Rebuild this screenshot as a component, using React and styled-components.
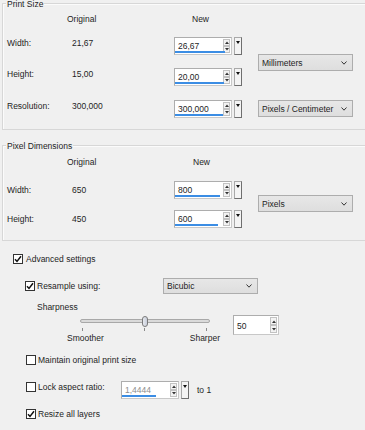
import React from 'react';
import styled, { createGlobalStyle } from 'styled-components';

const Global = createGlobalStyle`
  html, body { margin: 0; padding: 0; background: #f0f0f0; }
  body {
    font-family: "Liberation Sans", Arial, sans-serif;
    font-size: 8.5px;
    color: #1e1e1e;
    overflow: hidden;
  }
  #root { width: 365px; height: 430px; overflow: hidden; }
`;

const Page = styled.div`
  width: 365px;
  height: 430px;
  box-sizing: border-box;
  padding: 3px 0 0 2px;
  display: flex;
  flex-direction: column;
  overflow: hidden;
`;

const Group = styled.section`
  position: relative;
  flex: none;
  width: 372px;
  height: ${p => p.$h}px;
  box-sizing: border-box;
  border: 1px solid #d7d7d7;
  border-right: none;
  box-shadow: inset 1px 1px 0 #fbfbfb;
  margin-bottom: ${p => p.$mb || 0}px;
  padding: ${p => p.$pt}px 0 0 4px;
`;

const Legend = styled.span`
  position: absolute;
  top: -5px;
  left: 3px;
  padding: 0 1px;
  line-height: 10px;
  background: #f0f0f0;
  white-space: nowrap;
`;

const Grid = styled.div`
  display: grid;
  grid-template-columns: 65px 102px 68px 16px 95px;
  grid-template-rows: ${p => p.$rows};
  align-items: start;
`;

const ColHead = styled.span`
  grid-row: 1;
  grid-column: ${p => p.$col};
  margin-left: ${p => p.$indent}px;
  line-height: 10px;
  white-space: nowrap;
`;

const Cell = styled.span`
  grid-row: ${p => p.$r};
  grid-column: ${p => p.$col};
  padding-top: ${p => p.$off}px;
  line-height: 10px;
  white-space: nowrap;
`;

const SpinPlace = styled.div`
  grid-row: ${p => p.$r};
  grid-column: 3;
`;

const SelectPlace = styled.div`
  grid-row: ${p => p.$r};
  grid-column: 5;
  margin-top: ${p => p.$mt}px;
`;

/* ---------- spin box ---------- */
const Spin = styled.div`
  display: flex;
  width: ${p => p.$w}px;
  height: ${p => p.$h}px;
  flex: none;
`;

const Field = styled.div`
  position: relative;
  flex: 1;
  display: flex;
  box-sizing: border-box;
  border: 1px solid #adadad;
  border-right-color: #c8c8c8;
  border-bottom-color: #c8c8c8;
  background: #fff;
`;

const FieldText = styled.span`
  flex: 1;
  padding: ${p => p.$pt}px 0 0 3px;
  line-height: 10px;
  color: ${p => (p.$disabled ? '#8d8d8d' : '#1e1e1e')};
`;

const ValueBar = styled.span`
  position: absolute;
  left: 0;
  bottom: 1px;
  height: 2px;
  background: #3b8de4;
`;

const Arrows = styled.div`
  display: flex;
  flex-direction: column;
  justify-content: center;
  gap: 0;
  width: 7px;
  margin: 1px 1px 1px 0;
`;

const ArrowBtn = styled.span`
  flex: 1;
  box-sizing: border-box;
  border: 1px solid #c2c2c2;
  background: #f3f3f3;
  display: flex;
  align-items: center;
  justify-content: center;
`;

const MenuBtn = styled.span`
  width: 8px;
  margin-left: 2px;
  box-sizing: border-box;
  border: 1px solid #a9a9a9;
  border-right-color: #6f6f6f;
  border-bottom-color: #6f6f6f;
  background: #f4f4f4;
  display: flex;
  justify-content: center;
  padding-top: 3px;
`;

const Tri = ({ up }) => (
  <svg width="4" height="3" viewBox="0 0 4 3">
    <path d={up ? 'M0 3 L2 0.5 L4 3 Z' : 'M0 0 L2 2.5 L4 0 Z'} fill="#333" />
  </svg>
);

function SpinBox({ value, bar, w = 68, h = 18, menu = true, disabled, pt = 3 }) {
  return (
    <Spin $w={w} $h={h}>
      <Field>
        <FieldText $pt={pt} $disabled={disabled}>{value}</FieldText>
        {bar ? <ValueBar style={{ width: bar }} /> : null}
        <Arrows>
          <ArrowBtn><Tri up /></ArrowBtn>
          <ArrowBtn><Tri /></ArrowBtn>
        </Arrows>
      </Field>
      {menu ? (
        <MenuBtn>
          <svg width="4" height="3" viewBox="0 0 4 3">
            <path d="M0 0 L4 0 L2 3 Z" fill="#111" />
          </svg>
        </MenuBtn>
      ) : null}
    </Spin>
  );
}

/* ---------- drop-down ---------- */
const Select = styled.div`
  width: ${p => p.$w}px;
  height: ${p => p.$h}px;
  box-sizing: border-box;
  border: 1px solid #adadad;
  background: linear-gradient(#e7e7e7, #dedede);
  display: flex;
  align-items: center;
  justify-content: space-between;
  padding: 0 5px 0 3px;
  line-height: 10px;
  white-space: nowrap;
  flex: none;
`;

function DropDown({ label, w = 95, h = 17 }) {
  return (
    <Select $w={w} $h={h}>
      <span>{label}</span>
      <svg width="6" height="4" viewBox="0 0 6 4">
        <path d="M0.5 0.5 L3 3.2 L5.5 0.5" fill="none" stroke="#333" strokeWidth="1" />
      </svg>
    </Select>
  );
}

/* ---------- check boxes ---------- */
const Row = styled.div`
  display: flex;
  align-items: flex-start;
  flex: none;
  margin-top: ${p => p.$mt}px;
  margin-left: ${p => p.$ml}px;
  height: ${p => p.$h}px;
`;

const CheckWrap = styled.label`
  display: flex;
  align-items: flex-start;
  width: ${p => (p.$w ? `${p.$w}px` : 'auto')};
  margin-top: ${p => p.$mt || 0}px;
  flex: none;
`;

const Box = styled.span`
  width: 10px;
  height: 10px;
  box-sizing: border-box;
  border: 1px solid #333;
  background: #fff;
  display: flex;
  align-items: center;
  justify-content: center;
  flex: none;
`;

const CheckText = styled.span`
  margin-left: ${p => p.$gap}px;
  line-height: 10px;
  white-space: nowrap;
`;

function Check({ checked, label, gap = 2, w, mt }) {
  return (
    <CheckWrap $w={w} $mt={mt}>
      <Box>
        {checked ? (
          <svg width="8" height="8" viewBox="0 0 8 8">
            <path d="M1 4.2 L3 6.4 L7 1.2" fill="none" stroke="#111" strokeWidth="1.5" />
          </svg>
        ) : null}
      </Box>
      <CheckText $gap={gap}>{label}</CheckText>
    </CheckWrap>
  );
}

const Plain = styled.span`
  line-height: 10px;
  white-space: nowrap;
  margin-left: ${p => p.$ml || 0}px;
  margin-top: ${p => p.$mt || 0}px;
`;

const Spacer = styled.div`
  margin-left: ${p => p.$ml || 0}px;
  margin-top: ${p => p.$mt || 0}px;
`;

/* ---------- slider ---------- */
const SliderBox = styled.div`
  display: flex;
  flex-direction: column;
  width: 153px;
  flex: none;
`;

const TrackArea = styled.div`
  position: relative;
  height: 20px;
  margin-left: 13px;
  width: 130px;
`;

const Track = styled.div`
  position: absolute;
  left: 0;
  right: 0;
  top: 6px;
  height: 4px;
  box-sizing: border-box;
  border: 1px solid #a8a8a8;
  border-radius: 2px;
  background: #dadada;
`;

const Thumb = styled.div`
  position: absolute;
  top: 3px;
  width: 6px;
  height: 11px;
  box-sizing: border-box;
  border: 1px solid #7a7a7a;
  border-radius: 3px;
  background: linear-gradient(90deg, #e6e9ef, #c9ceda);
`;

const Tick = styled.div`
  position: absolute;
  top: 15px;
  width: 1px;
  height: 3px;
  background: #8a8a8a;
`;

const SliderLabels = styled.div`
  display: flex;
  justify-content: space-between;
  line-height: 10px;
`;

function Slider({ pct }) {
  const x = Math.round(130 * pct);
  return (
    <SliderBox>
      <TrackArea>
        <Track />
        <Tick style={{ left: 2 }} />
        <Tick style={{ left: 64 }} />
        <Tick style={{ left: 126 }} />
        <Thumb style={{ left: x - 3 }} />
      </TrackArea>
      <SliderLabels>
        <span>Smoother</span>
        <span>Sharper</span>
      </SliderLabels>
    </SliderBox>
  );
}

const printRows = [
  { label: 'Width:', orig: '21,67', val: '26,67', bar: 50 },
  { label: 'Height:', orig: '15,00', val: '20,00', bar: 49 },
  { label: 'Resolution:', orig: '300,000', val: '300,000', bar: 48 },
];

const pixelRows = [
  { label: 'Width:', orig: '650', val: '800', bar: 45 },
  { label: 'Height:', orig: '450', val: '600', bar: 43 },
];

export default function App() {
  return (
    <>
      <Global />
      <Page>
        <Group $h={127} $pt={10} $mb={15}>
          <Legend>Print Size</Legend>
          <Grid $rows="23px 31px 32px 18px">
            <ColHead $col={2} $indent={-5}>Original</ColHead>
            <ColHead $col={3} $indent={18}>New</ColHead>
            {printRows.map((r, i) => (
              <React.Fragment key={r.label}>
                <Cell $r={i + 2} $col={1} $off={1}>{r.label}</Cell>
                <Cell $r={i + 2} $col={2} $off={1}>{r.orig}</Cell>
                <SpinPlace $r={i + 2}>
                  <SpinBox value={r.val} bar={r.bar} />
                </SpinPlace>
              </React.Fragment>
            ))}
            <SelectPlace $r={2} $mt={17}>
              <DropDown label="Millimeters" />
            </SelectPlace>
            <SelectPlace $r={4} $mt={0}>
              <DropDown label="Pixels / Centimeter" />
            </SelectPlace>
          </Grid>
        </Group>

        <Group $h={96} $pt={11}>
          <Legend>Pixel Dimensions</Legend>
          <Grid $rows="24px 29px 18px">
            <ColHead $col={2} $indent={-5}>Original</ColHead>
            <ColHead $col={3} $indent={19}>New</ColHead>
            {pixelRows.map((r, i) => (
              <React.Fragment key={r.label}>
                <Cell $r={i + 2} $col={1} $off={4}>{r.label}</Cell>
                <Cell $r={i + 2} $col={2} $off={4}>{r.orig}</Cell>
                <SpinPlace $r={i + 2}>
                  <SpinBox value={r.val} bar={r.bar} />
                </SpinPlace>
              </React.Fragment>
            ))}
            <SelectPlace $r={2} $mt={14}>
              <DropDown label="Pixels" />
            </SelectPlace>
          </Grid>
        </Group>

        <Row $mt={13} $ml={11} $h={10}>
          <Check checked label="Advanced settings" gap={3} />
        </Row>

        <Row $mt={14} $ml={23} $h={16}>
          <Check checked label="Resample using:" w={138} mt={3} />
          <DropDown label="Bicubic" h={16} />
        </Row>

        <Row $mt={8} $ml={35} $h={10}>
          <Plain>Sharpness</Plain>
        </Row>

        <Row $mt={1} $ml={65} $h={30}>
          <Slider pct={0.5} />
          <Spacer $ml={13} $mt={2}>
            <SpinBox value="50" w={46} h={20} menu={false} pt={5} />
          </Spacer>
        </Row>

        <Row $mt={12} $ml={24} $h={10}>
          <Check label="Maintain original print size" />
        </Row>

        <Row $mt={16} $ml={24} $h={18}>
          <Check label="Lock aspect ratio:" w={95} mt={1} />
          <SpinBox value="1,4444" bar={34} disabled />
          <Plain $ml={8} $mt={4}>to 1</Plain>
        </Row>

        <Row $mt={10} $ml={24} $h={10}>
          <Check checked label="Resize all layers" />
        </Row>
      </Page>
    </>
  );
}
